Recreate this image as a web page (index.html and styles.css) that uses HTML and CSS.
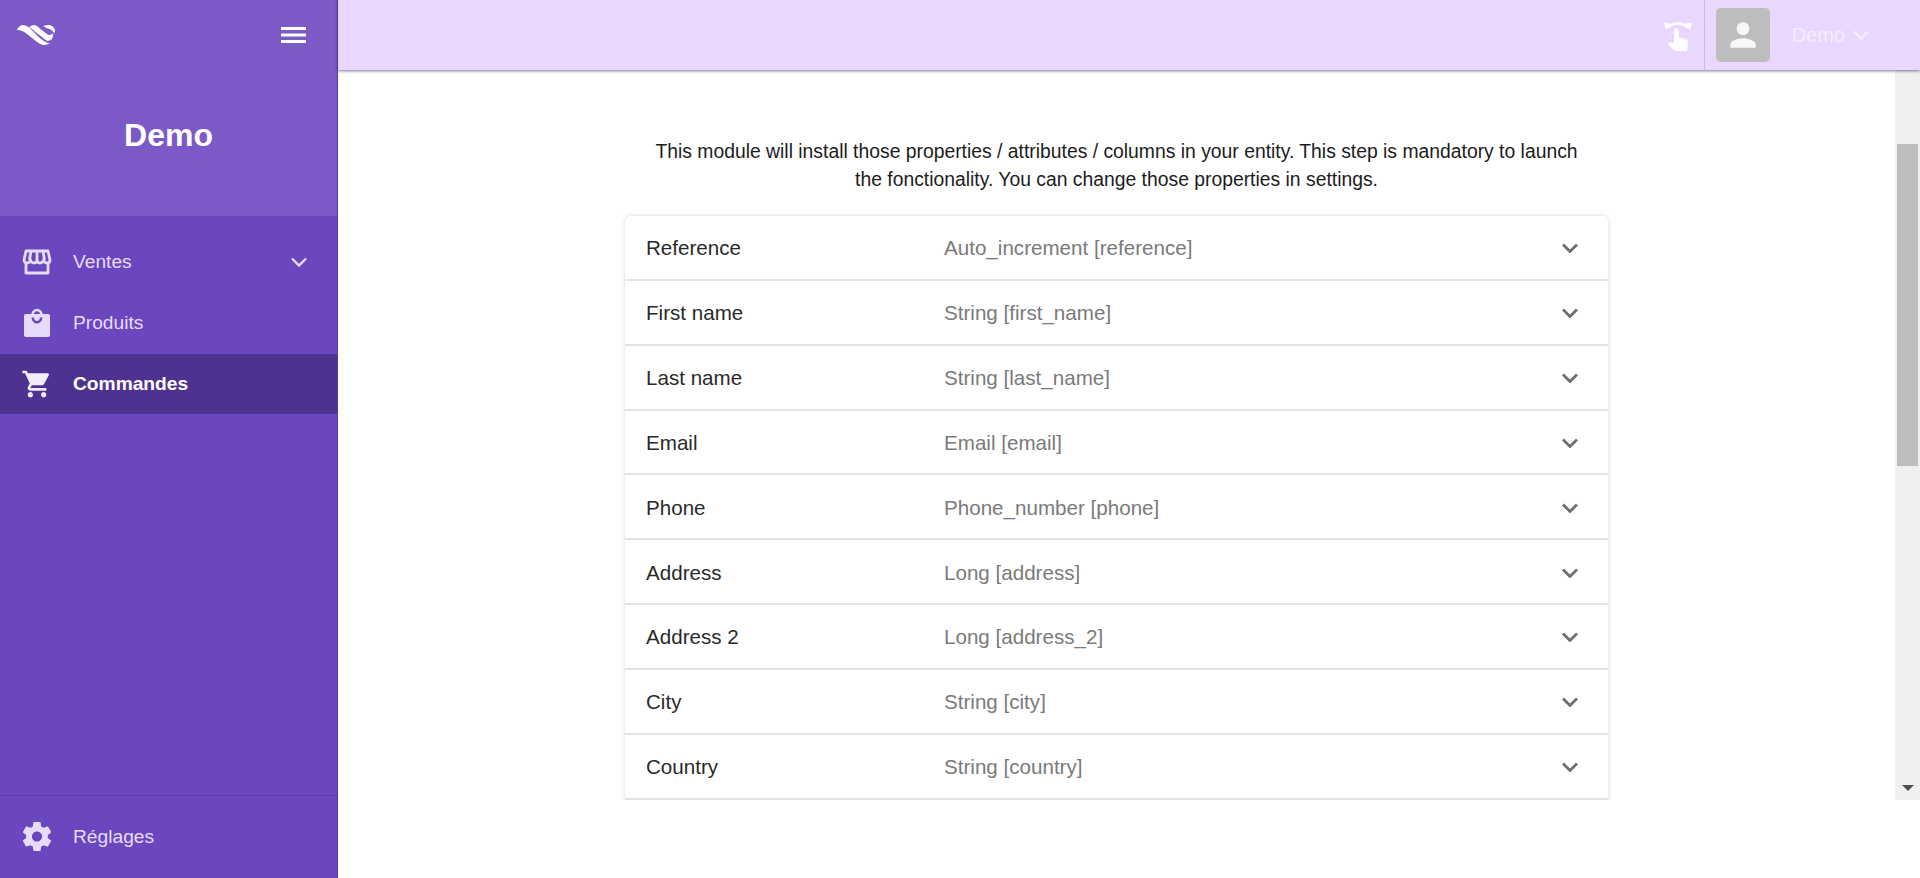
FILE: index.html
```html
<!DOCTYPE html>
<html lang="en">
<head>
    <meta charset="UTF-8">
    <meta name="viewport" content="width=device-width, initial-scale=1.0">
    <title>Demo</title>
    <link rel="stylesheet" href="styles.css">
</head>
<body>
<div class="sidebar">
    <div class="sidebar-head">
        <div class="sidebar-top">
            <svg class="logo" viewBox="0 0 40 22" width="40" height="22" fill="#fff">
                <path d="M.7 6Q3.500 1 7.300 1 11 1.500 14 4.300L20.700 11Q25 15.500 29 17.700 31.500 19 34 19.300 30.500 21.500 27 21 23.500 20 20.700 17.700L12.300 11Q9 8 5.700 6.700 3 5.700.7 6Z"/>
                <path d="M13 3.300Q16 .8 19 1 22 2.500 25.700 6L32.300 11Q35 11.500 37.300 9.300 37 13 35.700 15.300 33 17.300 30.700 16.700 28 15 25.700 12.700L19 7.700Q16 4.500 13 3.300Z"/>
                <path d="M27.300 2Q30.500.5 34 1 38 2.500 39 6 39 8 38.300 9.300 36.500 6.500 34 5.300 32 4.500 30.700 4.300 28.500 3 27.300 2Z"/>
            </svg>
            <svg class="burger" viewBox="0 0 26 18" width="26" height="18">
                <path d="M0 1h25v3H0zM0 7.500h25v3H0zM0 14h25v3H0z" fill="#fff"/>
            </svg>
        </div>
        <h1 class="brand">Demo</h1>
    </div>
    <div class="nav">
        <a class="nav-item">
            <svg class="nav-icon" viewBox="0 0 28 26" width="28" height="26" fill="none" stroke="#e6dcf8" stroke-width="2.800">
                <path d="M3 2h22l2 9c0 2-1.500 3-3 3s-3-1-3.500-3c-.5 2-2 3-3.500 3s-3-1-3-3c0 2-1.500 3-3 3s-3-1-3.500-3c-.5 2-2 3-3.500 3S1 13 1 11z" stroke-linejoin="round"/>
                <path d="M8 2l-1.500 9M14 2v9M20 2l1.500 9"/>
                <path d="M3 14v10h22V14" stroke-linejoin="round"/>
            </svg>
            <span class="nav-label">Ventes</span>
            <svg class="nav-chevron" viewBox="0 0 16 10" width="16" height="10" fill="none" stroke="#e6dcf8" stroke-width="2.400"><path d="M1 1.500l7 7 7-7"/></svg>
        </a>
        <a class="nav-item">
            <svg class="nav-icon" viewBox="0 0 28 30" width="28" height="30">
                <path d="M3 6h5.300C9 3 11 .8 14 .8S19 3 19.700 6H25a2 2 0 0 1 2 2v19a2 2 0 0 1-2 2H3a2 2 0 0 1-2-2V8a2 2 0 0 1 2-2zM10.800 6h6.400C16.700 4.400 15.500 3.300 14 3.300S11.300 4.400 10.800 6zM8.500 9.500C8.800 13 11 15.500 14 15.500s5.200-2.500 5.500-6h-2.400C16.800 11.500 15.700 13 14 13s-2.800-1.500-3.100-3.500z" fill="#e6dcf8" fill-rule="evenodd"/>
            </svg>
            <span class="nav-label">Produits</span>
        </a>
        <a class="nav-item active">
            <svg class="nav-icon" viewBox="0 0 24 24" width="32" height="32">
                <path d="M7 18c-1.100 0-1.990.9-1.990 2S5.900 22 7 22s2-.9 2-2-.9-2-2-2zM1 2v2h2l3.600 7.590-1.350 2.450c-.16.28-.25.61-.25.960 0 1.100.9 2 2 2h12v-2H7.420c-.14 0-.25-.11-.25-.25l.03-.12.9-1.630h7.450c.75 0 1.410-.41 1.750-1.030l3.580-6.490A1 1 0 0 0 20 4H5.210l-.94-2H1zm16 16c-1.100 0-1.990.9-1.990 2s.89 2 1.990 2 2-.9 2-2-.9-2-2-2z" fill="#f1ebfc"/>
            </svg>
            <span class="nav-label">Commandes</span>
        </a>
    </div>
    <div class="sidebar-foot">
        <a class="nav-item">
            <svg class="nav-icon" viewBox="2 2 20 20" width="29" height="29">
                <path d="M19.430 12.980c.04-.32.07-.64.07-.98s-.03-.66-.07-.98l2.110-1.650c.19-.15.24-.42.12-.64l-2-3.460c-.12-.22-.39-.3-.61-.22l-2.490 1c-.52-.4-1.080-.73-1.690-.98l-.38-2.650A.488.488 0 0 0 14 2h-4c-.25 0-.46.18-.49.42l-.38 2.650c-.61.25-1.170.59-1.690.98l-2.490-1c-.23-.09-.49 0-.61.22l-2 3.460c-.13.22-.07.49.12.64l2.110 1.650c-.04.32-.07.65-.07.98s.03.66.07.98l-2.110 1.650c-.19.15-.24.42-.12.64l2 3.460c.12.22.39.3.61.22l2.490-1c.52.4 1.080.73 1.690.98l.38 2.650c.03.24.24.42.49.42h4c.25 0 .46-.18.49-.42l.38-2.650c.61-.25 1.170-.59 1.690-.98l2.490 1c.23.09.49 0 .61-.22l2-3.460c.12-.22.07-.49-.12-.64l-2.110-1.650zM12 15.500c-1.930 0-3.500-1.570-3.500-3.500s1.570-3.500 3.500-3.500 3.500 1.570 3.500 3.500-1.570 3.500-3.500 3.500z" fill="#e6dcf8"/>
            </svg>
            <span class="nav-label">Réglages</span>
        </a>
    </div>
</div>

<div class="page">
    <div class="topbar">
        <svg class="swipe" viewBox="0 0 28 32" width="28" height="32" fill="#fff">
            <path d="M4 9C9 3 19 3 24 9" fill="none" stroke="#fff" stroke-width="2.600"/>
            <path d="M0 3.500l7.500 1.500-5.500 6zM28 3.500l-7.500 1.500 5.500 6z"/>
            <path d="M10 11.500a2.300 2.300 0 0 1 4.600 0V18l7.400 2.200c1.300.4 2 1.400 2 2.800l-.6 7.500a1.500 1.500 0 0 1-1.500 1.500H11.500c-.6 0-1.100-.2-1.500-.7l-6-6.100 1.400-1.500c.4-.4 1-.6 1.600-.5l3 .7z"/>
        </svg>
        <div class="top-divider"></div>
        <div class="avatar">
            <svg viewBox="0 0 24 24" width="38" height="38"><path d="M12 12c2.210 0 4-1.790 4-4s-1.790-4-4-4-4 1.790-4 4 1.790 4 4 4zm0 2c-2.670 0-8 1.340-8 4v2h16v-2c0-2.660-5.330-4-8-4z" fill="#f7f7f7"/></svg>
        </div>
        <span class="user-name">Demo</span>
        <svg class="user-chevron" viewBox="0 0 16 10" width="16" height="10" fill="none" stroke="#f5edff" stroke-width="2.600"><path d="M1 1.500l7 7 7-7"/></svg>
    </div>
    <div class="content">
        <div class="main">
            <p class="intro">This module will install those properties / attributes / columns in your entity. This step is mandatory to launch the fonctionality. You can change those properties in settings.</p>
            <div class="card">
                <div class="row"><span class="row-name">Reference</span><span class="row-type">Auto_increment [reference]</span><svg class="row-chevron" viewBox="0 0 16 10" width="16" height="10"><path d="M1 1.500l7 7 7-7"/></svg></div>
                <div class="row"><span class="row-name">First name</span><span class="row-type">String [first_name]</span><svg class="row-chevron" viewBox="0 0 16 10" width="16" height="10"><path d="M1 1.500l7 7 7-7"/></svg></div>
                <div class="row"><span class="row-name">Last name</span><span class="row-type">String [last_name]</span><svg class="row-chevron" viewBox="0 0 16 10" width="16" height="10"><path d="M1 1.500l7 7 7-7"/></svg></div>
                <div class="row"><span class="row-name">Email</span><span class="row-type">Email [email]</span><svg class="row-chevron" viewBox="0 0 16 10" width="16" height="10"><path d="M1 1.500l7 7 7-7"/></svg></div>
                <div class="row"><span class="row-name">Phone</span><span class="row-type">Phone_number [phone]</span><svg class="row-chevron" viewBox="0 0 16 10" width="16" height="10"><path d="M1 1.500l7 7 7-7"/></svg></div>
                <div class="row"><span class="row-name">Address</span><span class="row-type">Long [address]</span><svg class="row-chevron" viewBox="0 0 16 10" width="16" height="10"><path d="M1 1.500l7 7 7-7"/></svg></div>
                <div class="row"><span class="row-name">Address 2</span><span class="row-type">Long [address_2]</span><svg class="row-chevron" viewBox="0 0 16 10" width="16" height="10"><path d="M1 1.500l7 7 7-7"/></svg></div>
                <div class="row"><span class="row-name">City</span><span class="row-type">String [city]</span><svg class="row-chevron" viewBox="0 0 16 10" width="16" height="10"><path d="M1 1.500l7 7 7-7"/></svg></div>
                <div class="row"><span class="row-name">Country</span><span class="row-type">String [country]</span><svg class="row-chevron" viewBox="0 0 16 10" width="16" height="10"><path d="M1 1.500l7 7 7-7"/></svg></div>
            </div>
        </div>
        <div class="scrollbar">
            <div class="scroll-thumb"></div>
            <div class="scroll-arrow"></div>
        </div>
    </div>
</div>
</body>
</html>
```

FILE: styles.css
```css
* {
    box-sizing: border-box;
}
html, body {
    height: 100%;
}
body {
    margin: 0;
    display: flex;
    overflow: hidden;
    background-color: #fff;
    font-family: "Liberation Sans", Arial, sans-serif;
    color: #222;
}
.sidebar {
    width: 338px;
    flex: none;
    display: flex;
    flex-direction: column;
    background-color: #6a46bf;
    border-right: 1px solid #5b3aa8;
}
.sidebar-head {
    height: 216px;
    background-color: #7b59c6;
}
.sidebar-top {
    display: flex;
    align-items: center;
    justify-content: space-between;
    padding: 24px 30px 0 16px;
}
.logo {
    display: block;
}
.burger {
    display: block;
}
.brand {
    margin: 69px 0 0;
    font-size: 32px;
    line-height: 40px;
    font-weight: bold;
    text-align: center;
    color: #fff;
}
.nav {
    flex: 1;
    padding-top: 15px;
}
.nav-item {
    height: 61px;
    display: flex;
    align-items: center;
    padding: 0 30px 0 0;
    font-size: 19.200px;
    color: #e6dcf8;
}
.nav-icon {
    width: 72px;
    margin-left: 1px;
    flex: none;
}
.nav-label {
    flex: 1;
}
.nav-item.active {
    height: 60px;
    margin-top: 1px;
    background-color: #4f3290;
    color: #fff;
    font-weight: bold;
}
.sidebar-foot {
    height: 83px;
    padding-top: 10px;
    border-top: 1px solid #5d3cad;
}
.page {
    flex: 1;
    min-width: 0;
    display: flex;
    flex-direction: column;
}
.topbar {
    height: 70px;
    flex: none;
    display: flex;
    align-items: center;
    padding-right: 51px;
    background-color: #e9d7ff;
    box-shadow: 0 1px 3px rgba(40, 20, 90, 0.6);
    position: relative;
    z-index: 1;
}
.swipe {
    margin-left: auto;
}
.top-divider {
    width: 1px;
    height: 100%;
    margin-left: 12px;
    background-color: #cdb9e8;
}
.avatar {
    width: 54px;
    height: 54px;
    margin-left: 11px;
    border-radius: 5px;
    background-color: #bdbdbd;
    display: flex;
    align-items: center;
    justify-content: center;
}
.user-name {
    margin-left: 22px;
    font-size: 20px;
    color: #f5edff;
}
.user-chevron {
    margin-left: 8px;
}
.content {
    height: 730px;
    flex: none;
    display: flex;
}
.main {
    flex: 1;
    min-width: 0;
    overflow: hidden;
    padding-top: 68px;
}
.intro {
    width: 940px;
    margin: 0 auto 22px;
    font-size: 19.330px;
    line-height: 28px;
    text-align: center;
    color: #1c1c1c;
}
.card {
    width: 983px;
    margin: 0 auto;
    padding-bottom: 20px;
    border-radius: 6px 6px 0 0;
    background-color: #fff;
    box-shadow: 0 0 4px rgba(0, 0, 0, 0.16);
}
.row {
    height: 64.850px;
    display: flex;
    align-items: center;
    padding: 2px 27px 0 21px;
    border-bottom: 2px solid #e2e2e2;
    font-size: 20.600px;
}
.row-name {
    width: 298px;
    flex: none;
    color: #2a2a2a;
}
.row-type {
    flex: 1;
    color: #7a7a7a;
}
.row-chevron {
    fill: none;
    stroke: #6f6f6f;
    stroke-width: 2.800;
    margin-right: 3px;
}
.scrollbar {
    width: 25px;
    flex: none;
    display: flex;
    flex-direction: column;
    align-items: center;
    background-color: #f0f0f0;
    padding-top: 74px;
}
.scroll-thumb {
    width: 21px;
    height: 322px;
    background-color: #bdbdbd;
}
.scroll-arrow {
    width: 0;
    height: 0;
    margin-top: auto;
    margin-bottom: 9px;
    border-left: 6px solid transparent;
    border-right: 6px solid transparent;
    border-top: 6px solid #505050;
}
```
